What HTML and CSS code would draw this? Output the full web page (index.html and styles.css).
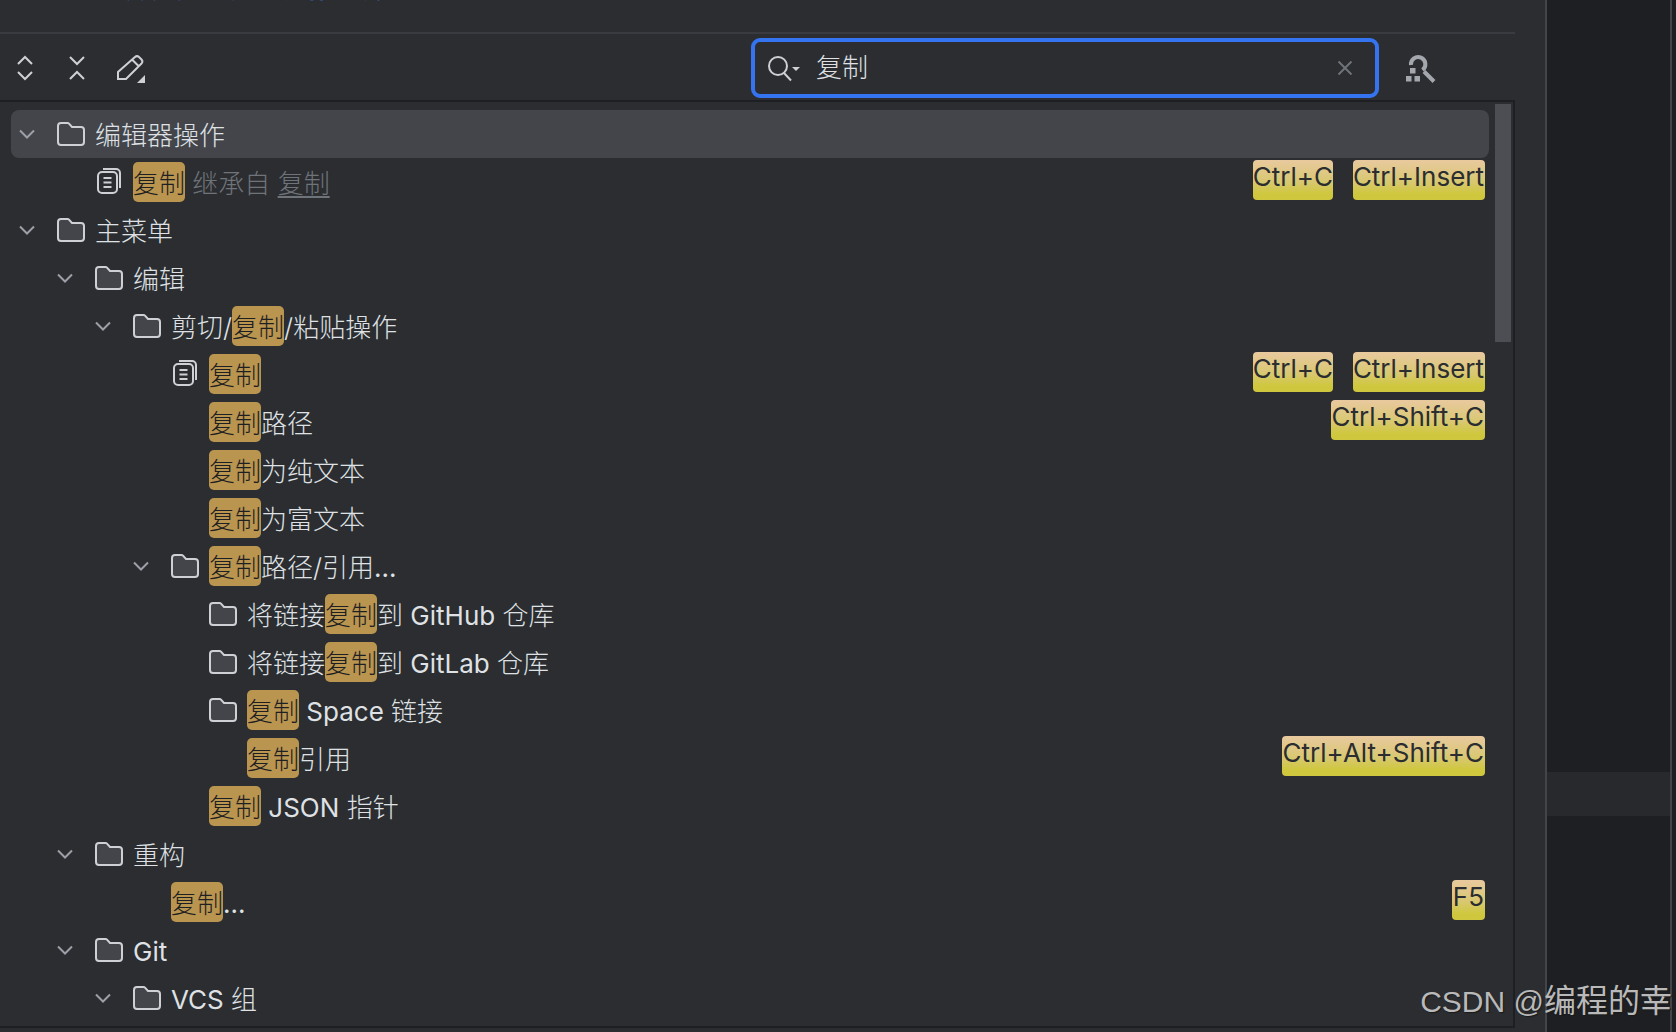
FILE: index.html
```html
<!DOCTYPE html>
<html lang="zh">
<head>
<meta charset="utf-8">
<title>键盘映射</title>
<link rel="stylesheet" href="styles.css">
</head>
<body>
<svg class="defs" width="0" height="0" aria-hidden="true">
  <symbol id="i-chev" viewBox="0 0 18 12"><path d="M2 2.500 9 9.500 16 2.500" fill="none" stroke="#9da0a8" stroke-width="2"/></symbol>
  <symbol id="i-folder" viewBox="0 0 30 26"><path d="M2 5a3 3 0 0 1 3-3h6.500a2 2 0 0 1 1.500.6L16 6h9a3 3 0 0 1 3 3v12a3 3 0 0 1-3 3H5a3 3 0 0 1-3-3Z" fill="#43454a" stroke="#ced0d6" stroke-width="2"/></symbol>
  <symbol id="i-copy" viewBox="0 0 26 28"><g fill="none" stroke="#ced0d6" stroke-width="2"><rect x="2" y="5" width="19" height="21" rx="4"/><path d="M7 2h13a4 4 0 0 1 4 4v15"/><path d="M7.500 11h8M7.500 15.500h8M7.500 20h8"/></g></symbol>
</svg>
<div class="window">
  <main class="panel">
    <div class="hint"><span class="hint-text">查看和管理键盘映射的设置</span></div>
    <div class="toolbar">
      <div class="tools">
        <svg class="tool tool-expand" width="18" height="26" viewBox="0 0 18 26"><path d="M2 9 9 2 16 9M2 17 9 24 16 17" fill="none" stroke="#ced0d6" stroke-width="2"/></svg>
        <svg class="tool tool-collapse" width="18" height="26" viewBox="0 0 18 26"><path d="M2 2 9 9 16 2M2 24 9 17 16 24" fill="none" stroke="#ced0d6" stroke-width="2"/></svg>
        <svg class="tool tool-pencil" width="30" height="30" viewBox="0 0 30 30"><path d="M2 18v7h8L25.500 9.500a3 3 0 0 0 0-4L23 3a3 3 0 0 0-4 0ZM16 5.500l6.500 6.500" fill="none" stroke="#ced0d6" stroke-width="2"/><path d="M29 21v8h-8Z" fill="#ced0d6"/></svg>
      </div>
      <div class="search">
        <svg class="search-icon" width="33" height="26" viewBox="0 0 33 26"><circle cx="10" cy="10" r="9" fill="none" stroke="#ced0d6" stroke-width="2"/><path d="M16 17 23 24.500" fill="none" stroke="#ced0d6" stroke-width="2"/><path d="M24 11h8l-4 4Z" fill="#ced0d6"/></svg>
        <span class="search-text">复制</span>
        <svg class="search-clear" width="16" height="16" viewBox="0 0 16 16"><path d="M1.500 1.500 14.500 14.500M14.500 1.500 1.500 14.500" fill="none" stroke="#6f737a" stroke-width="2"/></svg>
      </div>
      <svg class="find" width="32" height="32" viewBox="0 0 32 32"><path d="M6 13A7.200 7.200 0 1 1 17.500 18" fill="none" stroke="#a4a7ad" stroke-width="4"/><path d="M19 19.500 29 29.500" fill="none" stroke="#a4a7ad" stroke-width="4"/><path d="M5 16h5.500v5.500H5ZM1 24h5.500v5.500H1ZM9.500 24H15v5.500H9.500Z" fill="#a4a7ad"/></svg>
    </div>
    <div class="body">
      <div class="tree">
        <div class="row d0 selected"><svg class="chev"><use href="#i-chev"/></svg><svg class="folder"><use href="#i-folder"/></svg><span class="label">编辑器操作</span></div>
        <div class="row d1 leaf"><svg class="copy"><use href="#i-copy"/></svg><span class="label"><span class="hl">复制</span><span class="muted"> 继承自 <u>复制</u></span></span><span class="keys"><kbd class="tight">Ctrl+C</kbd><kbd class="ins">Ctrl+Insert</kbd></span></div>
        <div class="row d0"><svg class="chev"><use href="#i-chev"/></svg><svg class="folder"><use href="#i-folder"/></svg><span class="label">主菜单</span></div>
        <div class="row d1"><svg class="chev"><use href="#i-chev"/></svg><svg class="folder"><use href="#i-folder"/></svg><span class="label">编辑</span></div>
        <div class="row d2"><svg class="chev"><use href="#i-chev"/></svg><svg class="folder"><use href="#i-folder"/></svg><span class="label">剪切/<span class="hl">复制</span>/粘贴操作</span></div>
        <div class="row d3 leaf"><svg class="copy"><use href="#i-copy"/></svg><span class="label"><span class="hl">复制</span></span><span class="keys"><kbd class="tight">Ctrl+C</kbd><kbd class="ins">Ctrl+Insert</kbd></span></div>
        <div class="row d3 leaf bare"><span class="label"><span class="hl">复制</span>路径</span><span class="keys"><kbd>Ctrl+Shift+C</kbd></span></div>
        <div class="row d3 leaf bare"><span class="label"><span class="hl">复制</span>为纯文本</span></div>
        <div class="row d3 leaf bare"><span class="label"><span class="hl">复制</span>为富文本</span></div>
        <div class="row d3"><svg class="chev"><use href="#i-chev"/></svg><svg class="folder"><use href="#i-folder"/></svg><span class="label"><span class="hl">复制</span>路径/引用<span class="lat">...</span></span></div>
        <div class="row d4 leaf"><svg class="folder"><use href="#i-folder"/></svg><span class="label">将链接<span class="hl">复制</span>到 <span class="lat">GitHub</span> 仓库</span></div>
        <div class="row d4 leaf"><svg class="folder"><use href="#i-folder"/></svg><span class="label">将链接<span class="hl">复制</span>到 <span class="lat">GitLab</span> 仓库</span></div>
        <div class="row d4 leaf"><svg class="folder"><use href="#i-folder"/></svg><span class="label"><span class="hl">复制</span> <span class="lat">Space</span> 链接</span></div>
        <div class="row d4 leaf bare"><span class="label"><span class="hl">复制</span>引用</span><span class="keys"><kbd>Ctrl+Alt+Shift+C</kbd></span></div>
        <div class="row d3 leaf bare"><span class="label"><span class="hl">复制</span> <span class="lat">JSON</span> 指针</span></div>
        <div class="row d1"><svg class="chev"><use href="#i-chev"/></svg><svg class="folder"><use href="#i-folder"/></svg><span class="label">重构</span></div>
        <div class="row d2 leaf bare"><span class="label"><span class="hl">复制</span><span class="lat">...</span></span><span class="keys"><kbd>F5</kbd></span></div>
        <div class="row d1"><svg class="chev"><use href="#i-chev"/></svg><svg class="folder"><use href="#i-folder"/></svg><span class="label lat">Git</span></div>
        <div class="row d2"><svg class="chev"><use href="#i-chev"/></svg><svg class="folder"><use href="#i-folder"/></svg><span class="label"><span class="lat">VCS</span> 组</span></div>
      </div>
      <div class="scrollbar"></div>
    </div>
  </main>
  <div class="gutter"></div>
  <div class="editor"><div class="stripe"></div></div>
  <div class="edge"></div>
  <div class="tail"></div>
</div>
<div class="watermark"><span class="wm-lat">CSDN @</span>编程的幸</div>
</body>
</html>
```
FILE: styles.css
```css
* { box-sizing: border-box; }
html, body { margin: 0; height: 100%; }
body {
  position: relative;
  width: 1676px;
  height: 1032px;
  overflow: hidden;
  background: #2b2d30;
  color: #dfe1e5;
  font-family: Inter, "Noto Sans CJK SC", sans-serif;
  font-size: 26px;
  font-weight: 300;
}
.defs { position: absolute; }

.window { display: flex; height: 1032px; }

.panel {
  display: flex;
  flex-direction: column;
  flex: 0 0 1515px;
  height: 1028px;
  overflow: hidden;
}
.hint {
  flex: 0 0 34px;
  padding-left: 95px;
  overflow: hidden;
  border-bottom: 2px solid #393b40;
}
.hint-text {
  display: block;
  height: 34px;
  line-height: 34px;
  margin-top: -28px;
  color: #548af7;
}

.toolbar {
  display: flex;
  flex: 0 0 68px;
  padding-top: 4px;
  border-bottom: 2px solid #1e1f22;
}
.tools {
  display: flex;
  align-items: flex-start;
  flex: 0 0 751px;
  padding: 17px 0 0 16px;
}
.tool-collapse { margin-left: 34px; }
.tool-pencil { margin: -1px 0 0 30px; }

.search {
  display: flex;
  align-items: center;
  flex: 0 0 628px;
  height: 60px;
  padding: 0 22px 0 13px;
  border: 4px solid #3574f0;
  border-radius: 9px;
}
.search-icon { flex: none; margin-top: 2px; }
.search-text { margin: -6px 0 0 15px; color: #dfe1e5; }
.search-clear { margin-left: auto; }
.find { flex: none; margin: 14px 0 0 26px; }

.body {
  display: flex;
  flex: 1;
  min-height: 0;
  border-right: 2px solid #1e1f22;
  border-bottom: 2px solid #1e1f22;
}
.tree { flex: 0 0 1478px; margin-left: 11px; padding-top: 8px; }
.scrollbar {
  flex: 0 0 16px;
  height: 238px;
  margin: 2px 0 0 6px;
  background: #4c4e53;
}

.row {
  display: flex;
  align-items: center;
  height: 48px;
  padding-right: 4px;
  border-radius: 8px;
  white-space: pre;
}
.selected { background: #43454a; }
.d0 { padding-left: 8px; }
.d1 { padding-left: 46px; }
.d2 { padding-left: 84px; }
.d3 { padding-left: 122px; }
.leaf.d1 { padding-left: 84px; }
.leaf.d3 { padding-left: 160px; }
.leaf.d4 { padding-left: 198px; }
.bare.d2 { padding-left: 160px; }
.bare.d3 { padding-left: 198px; }
.bare.d4 { padding-left: 236px; }

.chev { flex: none; width: 18px; height: 12px; margin: 0 21px 0 -1px; }
.folder { flex: none; width: 30px; height: 26px; margin: 0 9px 0 -1px; }
.copy { flex: none; width: 26px; height: 28px; margin: -2px 11px 0 1px; }

.label { height: 40px; line-height: 44px; }
.lat { font-weight: 400; }
.hl {
  display: inline-block;
  height: 40px;
  border-radius: 5px;
  background: #ba9550;
  color: #1e1f22;
  vertical-align: top;
}
.muted { color: #6f737a; }
.muted u { text-decoration-thickness: 2px; text-underline-offset: 3px; }

.keys {
  display: flex;
  gap: 20px;
  align-self: flex-start;
  margin: 2px 0 0 auto;
}
kbd {
  display: block;
  height: 40px;
  padding: 0 1px;
  border-radius: 4px;
  background: linear-gradient(#e9c99f 0%, #d8c870 55%, #cfc73d 85%);
  color: #2b2d30;
  font-family: Inter, sans-serif;
  font-size: 26px;
  font-weight: 400;
  line-height: 33px;
}
kbd.tight { padding: 0; }
kbd.ins { padding: 0 1px 0 0; }

.gutter { flex: 0 0 30px; }
.editor {
  flex: 0 0 125px;
  border-left: 2px solid #43454a;
  background: #1e1f22;
  padding-top: 772px;
}
.stripe { height: 44px; background: #28292d; }
.edge { flex: 0 0 2px; background: #43454a; }
.tail { flex: 1; background: #1e1f22; }

.watermark {
  position: absolute;
  right: 4px;
  top: 979px;
  color: #b9b9b9;
  font-family: "Liberation Sans", "Noto Sans CJK SC", sans-serif;
  font-size: 32px;
  font-weight: 400;
  line-height: 44px;
  text-shadow: 1px 1px 1px #1a1a1a;
  white-space: nowrap;
}
.wm-lat { font-size: 30px; }
```
